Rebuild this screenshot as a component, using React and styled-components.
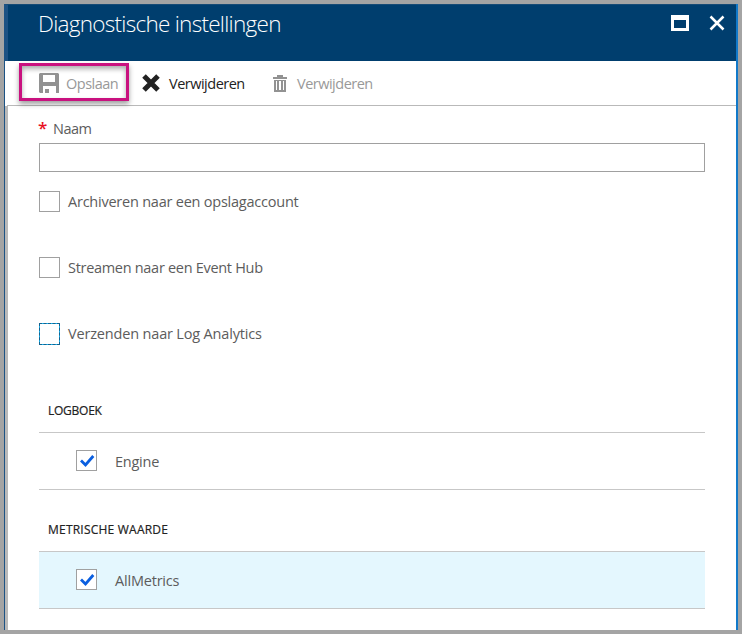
import React, { useState } from 'react';
import styled, { createGlobalStyle } from 'styled-components';

const GlobalStyle = createGlobalStyle`
  * { box-sizing: border-box; }
  body { margin: 0; background: #a4a4a4; font-family: "Open Sans", "Noto Sans", sans-serif; }
  button { font: inherit; }
`;

const Frame = styled.div`
  width: 742px;
  height: 634px;
  padding: 4px;
  background: #a4a4a4;
`;

const Blade = styled.main`
  display: flex;
  flex-direction: column;
  width: 734px;
  height: 626px;
  background: #fff;
  border-left: 1px solid #1c5284;
  border-right: 2px solid #1279c9;
`;

const Header = styled.header`
  display: flex;
  justify-content: space-between;
  flex: none;
  height: 57px;
  padding: 0 10px 0 30px;
  background: #003e6e;
  border-left: 3px solid #1c5284;
  border-top: 1px solid #174b76;
`;

const Title = styled.h1`
  margin: 1px 0 0;
  font-size: 22.5px;
  line-height: 36px;
  font-weight: 300;
  letter-spacing: -0.72px;
  white-space: nowrap;
  color: #fff;
`;

const WindowActions = styled.div`
  display: flex;
  gap: 19px;
  padding-top: 10px;
`;

const IconButton = styled.button`
  display: flex;
  width: 18px;
  height: 18px;
  padding: 0;
  border: 0;
  background: none;
`;

const Toolbar = styled.div`
  display: flex;
  flex: none;
  height: 45px;
  margin-left: 2px;
  padding: 2px 0 0 12px;
  border-bottom: 1px solid #b9b9b9;
`;

const ToolButton = styled.button`
  display: flex;
  align-items: center;
  flex: none;
  gap: ${p => p.$gap}px;
  width: ${p => p.$width}px;
  height: 38px;
  padding: 2px 0 0 ${p => p.$inset}px;
  border: ${p => (p.$marked ? '3px solid #c9117f' : '0')};
  box-shadow: ${p => (p.$marked ? '0 3px 5px rgba(0,0,0,.38), inset 0 3px 5px rgba(0,0,0,.32)' : 'none')};
  background: none;
  color: ${p => (p.$muted ? '#999' : '#222')};
  svg { flex: none; }
  span { padding-top: 2px; }
`;

const Label = styled.span`
  font-size: ${p => p.$size || 14.5}px;
  line-height: 22px;
  font-weight: 400;
  letter-spacing: ${p => p.$track || 0}px;
  white-space: nowrap;
`;

const Content = styled.div`
  flex: 1;
  border-left: 3px solid #b9b9b9;
  padding: 12px 31px 0;
  color: #5c5c5c;
`;

const FieldLabel = styled.label`
  display: flex;
  gap: 6px;
  height: 25px;
`;

const Required = styled.span`
  width: 8px;
  margin-left: -1px;
  margin-right: 1px;
  font-size: 17px;
  font-weight: 600;
  line-height: 20px;
  color: #e81123;
`;

const NameInput = styled.input`
  display: block;
  width: 666px;
  height: 29px;
  padding: 0 8px;
  border: 1px solid #a0a0a0;
  background: #fff;
`;

const Options = styled.div`
  display: grid;
  grid-template-rows: repeat(3, 66px);
  padding-top: 19px;
`;

const Option = styled.label`
  display: flex;
  align-items: flex-start;
  gap: 8px;
`;

const Box = styled.button`
  display: flex;
  flex: none;
  width: 21px;
  height: ${p => (p.$focused ? 22 : 21)}px;
  padding: 0;
  border: 1px solid ${p => (p.$focused ? '#15b1ec' : '#a0a0a0')};
  outline: ${p => (p.$focused ? '1px dashed #146390' : '0')};
  outline-offset: -1px;
  background: #fff;
`;

const Section = styled.section`
  height: 119px;
`;

const SectionTitle = styled.h2`
  display: flex;
  height: 43px;
  margin: 0;
  padding: 11px 0 0 9px;
  color: #222;
  -webkit-text-stroke: 0.2px #222;
`;

const MetricRow = styled.label`
  display: flex;
  align-items: center;
  gap: 18px;
  width: 666px;
  height: 58px;
  padding: 0 0 1px 37px;
  border: solid #c7c7c7;
  border-width: 1px 0;
  background: ${p => (p.$selected ? '#e4f7fe' : '#fff')};
  span { padding-top: 2px; }
`;

const MaximizeIcon = () => (
  <svg width="18" height="18" shapeRendering="crispEdges">
    <path d="M0 0H18V16H0Z M3 5V13H15V5Z" fill="#fff" fillRule="evenodd" />
  </svg>
);
const CloseIcon = () => (
  <svg width="18" height="18"><path d="M2.5 1.5 15.5 14.5M15.5 1.5 2.5 14.5" stroke="#fff" strokeWidth="2.5" /></svg>
);
const SaveIcon = () => (
  <svg width="20" height="20">
    <path d="M1 0H19L20 1V20H17V13H4V20H1L0 19V1Z M4 2V9H16V2Z M6 16H10V20H6Z" fill="#929292" fillRule="evenodd" />
  </svg>
);
const DiscardIcon = () => (
  <svg width="18" height="18"><path d="M2 2 16 16M16 2 2 16" stroke="#222" strokeWidth="5" /></svg>
);
const TrashIcon = () => (
  <svg width="14" height="17">
    <path d="M4 0H10V2H14V4H0V2H4Z M1 5H13V17H1Z M3 6V15H4V6Z M6 6V15H8V6Z M10 6V15H11V6Z" fill="#929292" fillRule="evenodd" />
  </svg>
);
const CheckIcon = () => (
  <svg width="19" height="19"><path d="M4 9.5 8.5 14 16.3 5" fill="none" stroke="#0a5fe0" strokeWidth="2.8" /></svg>
);

function CheckBox({ initial = false, focused, label }) {
  const [checked, setChecked] = useState(initial);
  return (
    <Box type="button" role="checkbox" aria-label={label} aria-checked={checked} $focused={focused} onClick={() => setChecked(!checked)}>
      {checked && <CheckIcon />}
    </Box>
  );
}

const options = [
  { label: 'Archiveren naar een opslagaccount', track: -0.23 },
  { label: 'Streamen naar een Event Hub', track: -0.3 },
  { label: 'Verzenden naar Log Analytics', track: -0.17, focused: true },
];

const sections = [
  { title: 'LOGBOEK', titleTrack: -0.25, item: 'Engine', track: -0.25 },
  { title: 'METRISCHE WAARDE', titleTrack: 0.22, item: 'AllMetrics', track: -0.2, selected: true },
];

export default function App() {
  return (
    <>
      <GlobalStyle />
      <Frame>
        <Blade>
          <Header>
            <Title>Diagnostische instellingen</Title>
            <WindowActions>
              <IconButton aria-label="Maximaliseren"><MaximizeIcon /></IconButton>
              <IconButton aria-label="Sluiten"><CloseIcon /></IconButton>
            </WindowActions>
          </Header>
          <Toolbar>
            <ToolButton $width={110} $inset={17} $gap={7} $marked $muted><SaveIcon /><Label $track={-0.5}>Opslaan</Label></ToolButton>
            <ToolButton $width={130} $inset={13} $gap={9}><DiscardIcon /><Label $track={-0.5}>Verwijderen</Label></ToolButton>
            <ToolButton $width={120} $inset={14} $gap={10} $muted><TrashIcon /><Label $track={-0.5}>Verwijderen</Label></ToolButton>
          </Toolbar>
          <Content>
            <FieldLabel htmlFor="name"><Required>*</Required><Label $track={-0.5}>Naam</Label></FieldLabel>
            <NameInput id="name" />
            <Options>
              {options.map(o => (
                <Option key={o.label}>
                  <CheckBox focused={o.focused} label={o.label} />
                  <Label $track={o.track}>{o.label}</Label>
                </Option>
              ))}
            </Options>
            {sections.map(s => (
              <Section key={s.title}>
                <SectionTitle><Label $size={12} $track={s.titleTrack}>{s.title}</Label></SectionTitle>
                <MetricRow $selected={s.selected}>
                  <CheckBox initial label={s.item} />
                  <Label $track={s.track}>{s.item}</Label>
                </MetricRow>
              </Section>
            ))}
          </Content>
        </Blade>
      </Frame>
    </>
  );
}
